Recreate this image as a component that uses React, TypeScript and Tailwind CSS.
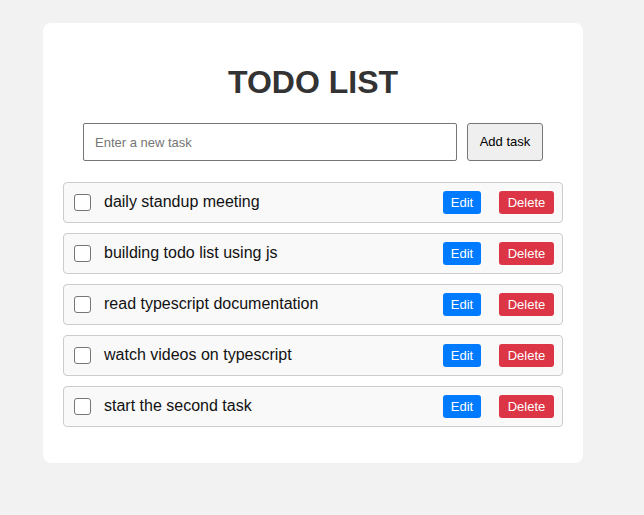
const tasks = [
  'daily standup meeting',
  'building todo list using js',
  'read typescript documentation',
  'watch videos on typescript',
  'start the second task',
];

const TodoItem: React.FC<{ text: string }> = ({ text }) => (
  <li className="flex items-center h-[41px] pl-[10px] pr-[8px] bg-[#f9f9f9] border border-[#cccccc] rounded-[4px]">
    <span className="w-[17px] h-[17px] border-[1.5px] border-[#767676] rounded-[3px] bg-white shrink-0" />
    <span className="ml-[13px] flex-1 text-[16px] text-[#111] -mt-[2px]">{text}</span>
    <button className="h-[23px] w-[38px] rounded-[3px] bg-[#007bff] text-white text-[13px]">
      Edit
    </button>
    <button className="ml-[18px] h-[23px] w-[55px] rounded-[3px] bg-[#dc3545] text-white text-[13px]">
      Delete
    </button>
  </li>
);

export default function App() {
  return (
    <div className="min-h-[515px] bg-[#f2f2f2] pt-[23px] pl-[43px] font-['Liberation_Sans',Arial,sans-serif]">
      <div className="w-[540px] h-[440px] bg-white rounded-[8px] px-[20px] pt-[41px]">
        <h1 className="text-center text-[32px] leading-[37px] font-bold text-[#333]">TODO LIST</h1>

        <div className="mt-[22px] flex justify-center gap-[10px]">
          <input
            className="w-[374px] h-[38px] border border-[#767676] rounded-[2px] px-[11px] text-[13px] outline-none placeholder:text-[#757575]"
            placeholder="Enter a new task"
          />
          <button className="w-[76px] h-[38px] border border-[#767676] rounded-[3px] bg-[#efefef] text-[13px] text-black">
            Add task
          </button>
        </div>

        <ul className="mt-[21px] flex flex-col gap-[10px]">
          {tasks.map((t) => (
            <TodoItem key={t} text={t} />
          ))}
        </ul>
      </div>
    </div>
  );
}
